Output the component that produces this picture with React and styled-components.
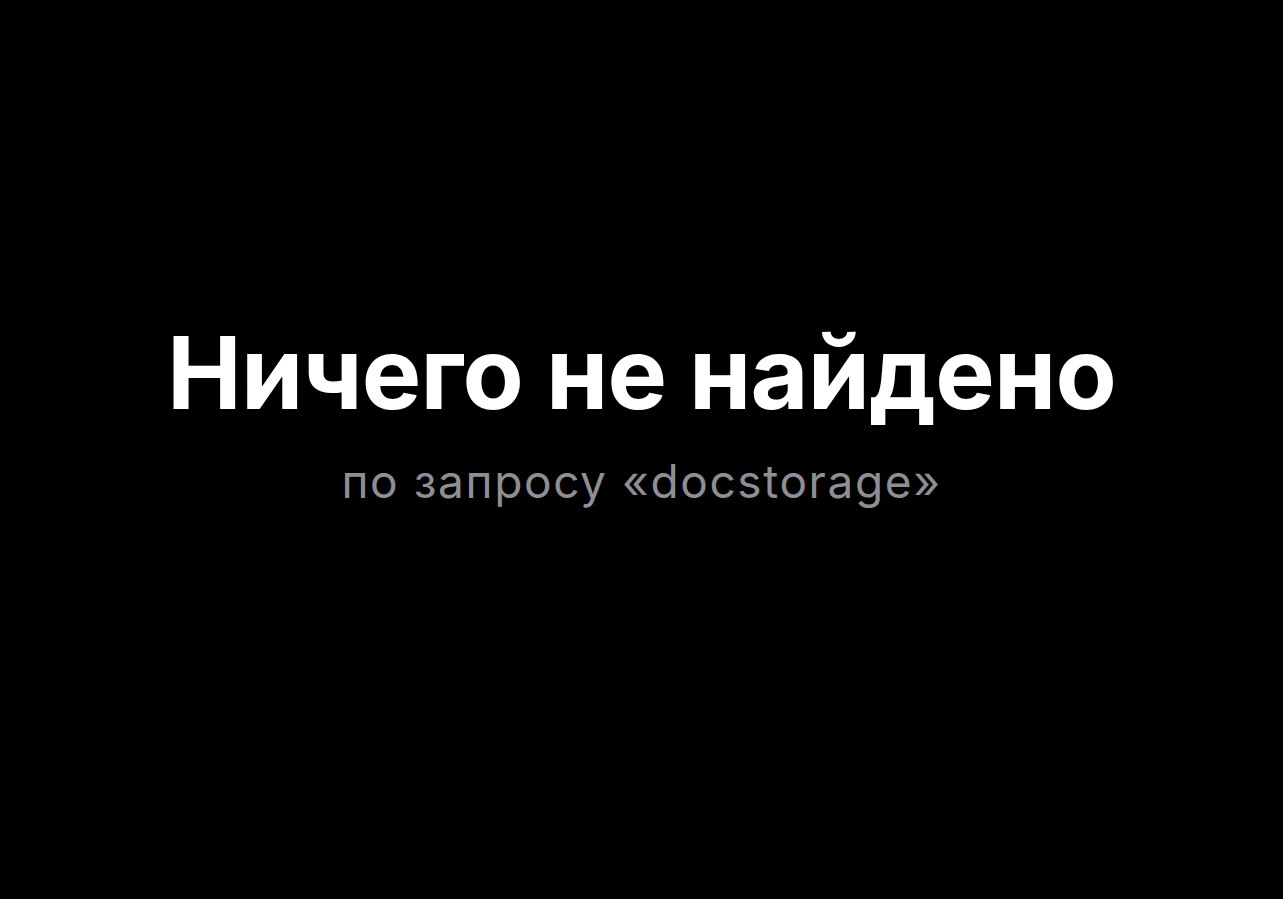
import React from "react";
import styled, { createGlobalStyle } from "styled-components";

const Global = createGlobalStyle`
  html, body { margin: 0; padding: 0; background: #000; }
  body { font-family: Inter, "Noto Sans", sans-serif; }
`;

const Screen = styled.main`
  height: 899px;
  display: flex;
  flex-direction: column;
  align-items: center;
  justify-content: flex-start;
  padding-top: 313px;
  box-sizing: border-box;
  background: #000;
`;

const Title = styled.h1`
  margin: 0;
  font-family: Inter, "Noto Sans", sans-serif;
  font-weight: 700;
  font-size: 100px;
  line-height: 120px;
  color: #fff;
  letter-spacing: -0.8px;
`;

const Subtitle = styled.p`
  margin: 21px 0 0;
  font-family: Inter, "Noto Sans", sans-serif;
  font-weight: 400;
  font-size: 46px;
  line-height: 54px;
  letter-spacing: 1.6px;
  color: #8e8e93;
`;

export default function App() {
  return (
    <>
      <Global />
      <Screen>
        <Title>Ничего не найдено</Title>
        <Subtitle>по запросу «docstorage»</Subtitle>
      </Screen>
    </>
  );
}
